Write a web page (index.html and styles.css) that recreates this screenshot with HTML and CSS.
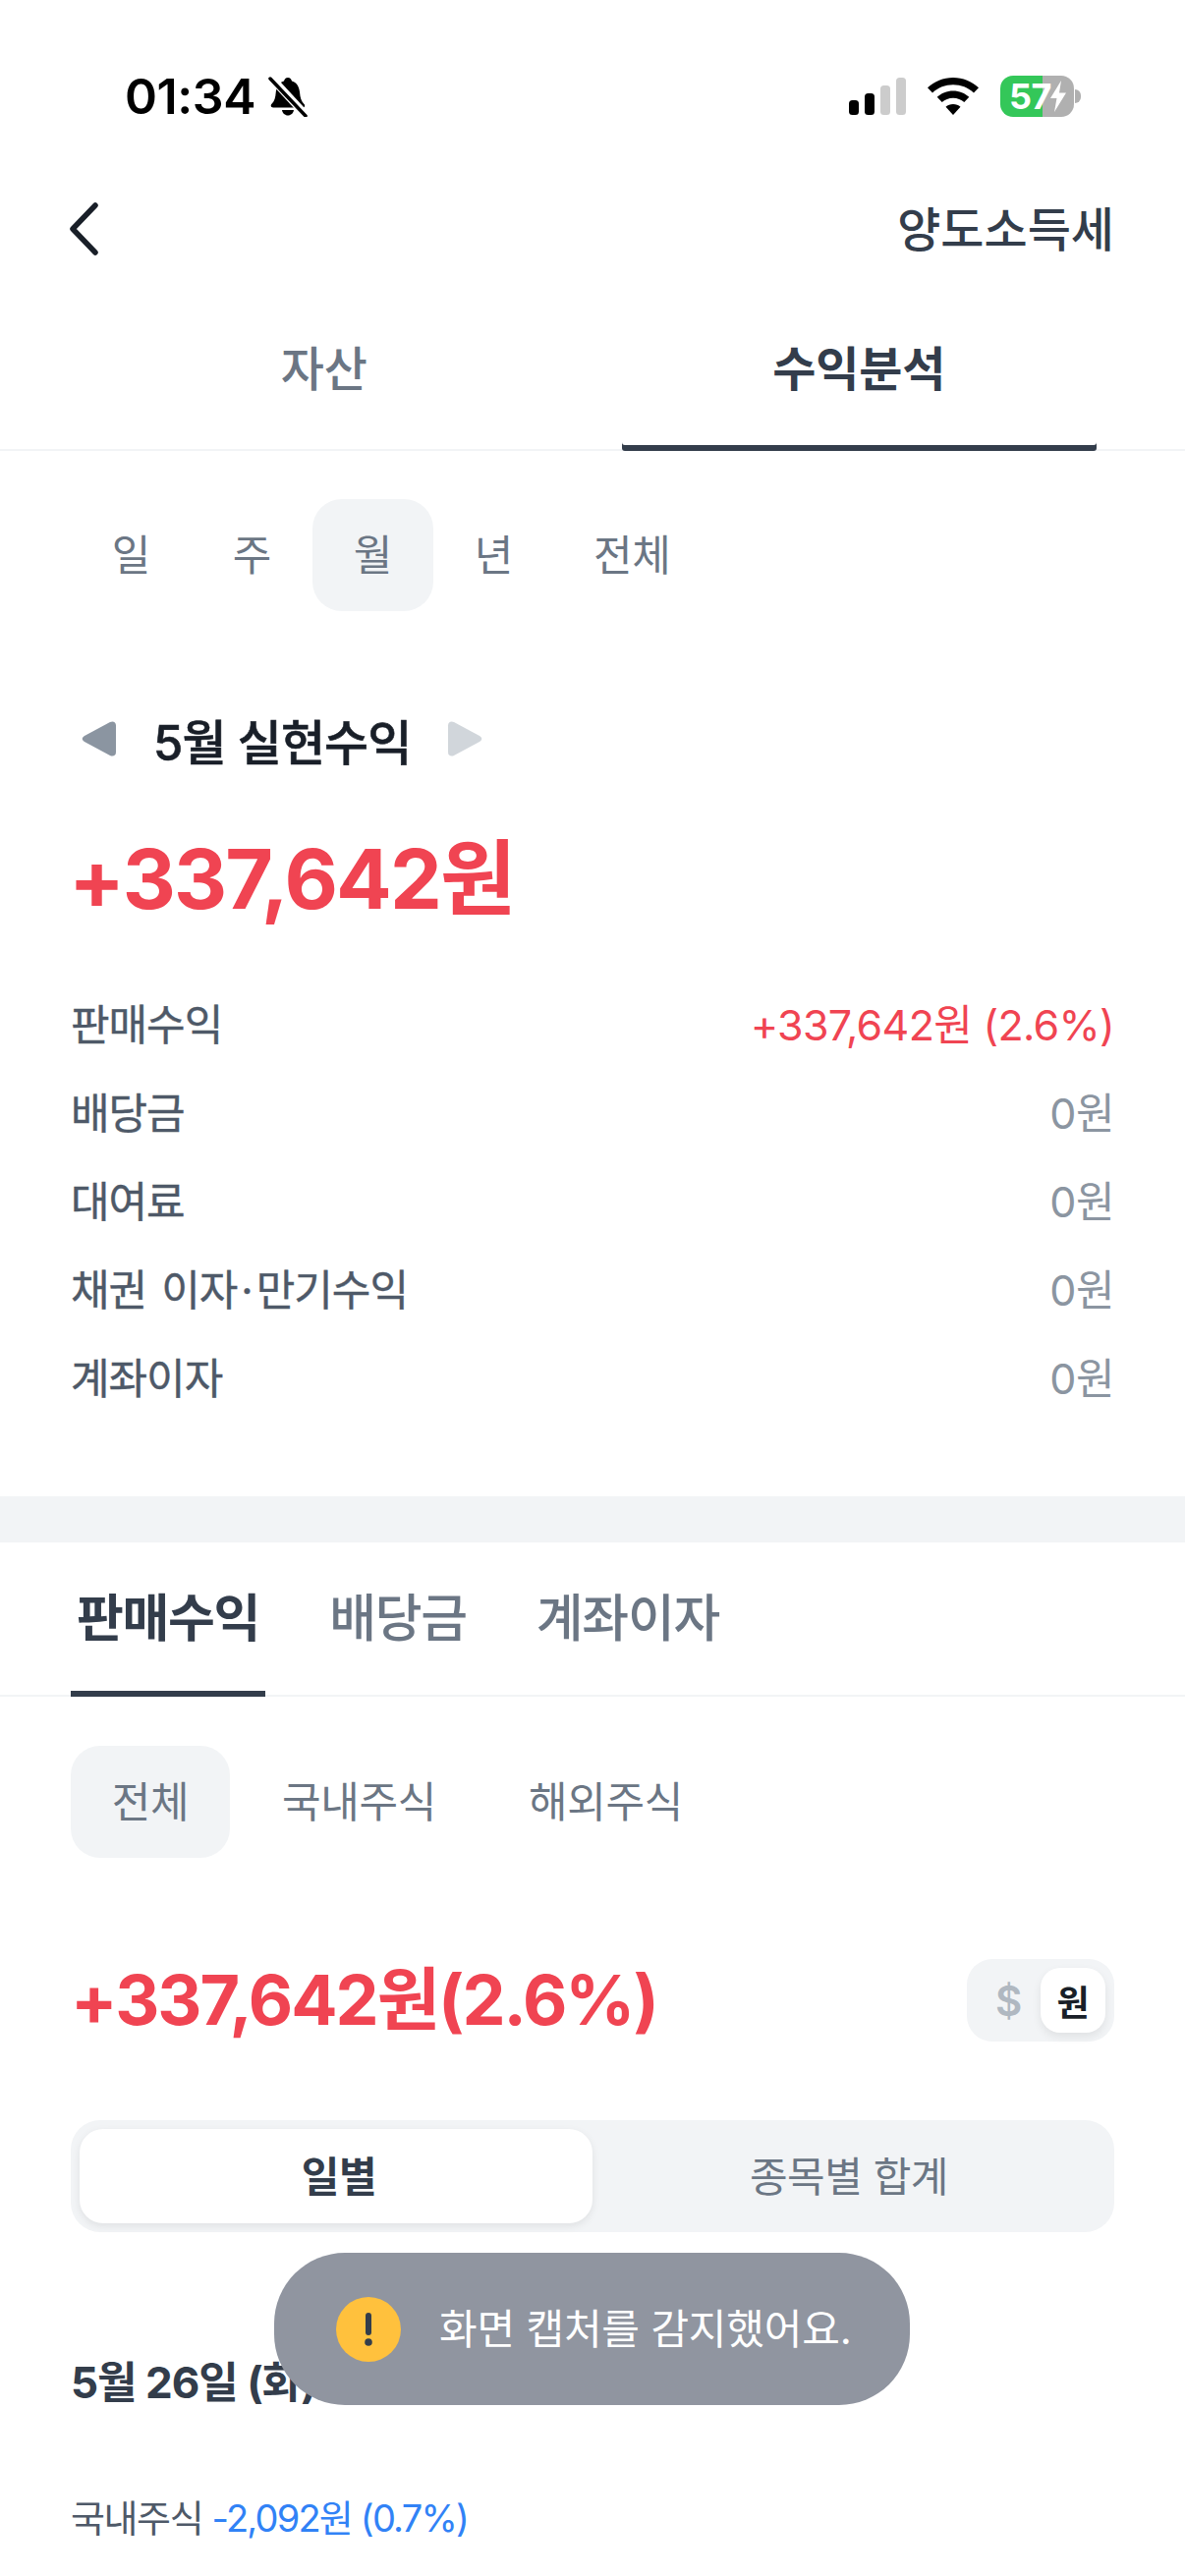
FILE: index.html
```html
<!DOCTYPE html>
<html lang="ko">
<head>
    <meta charset="UTF-8">
    <meta name="viewport" content="width=device-width, initial-scale=1.0">
    <title>양도소득세</title>
    <link rel="stylesheet" href="styles.css">
</head>
<body>

    <!-- Статус-бар -->
    <div class="status">
        <div class="status-left">
            <span class="time">01:34</span>
            <svg class="bell" width="42" height="42" viewBox="0 0 42 42">
                <path d="M21 2c2.200 0 3.600 1.500 4 3.600 5.600 1.700 7.600 6.400 8.100 12 .4 4.600 1.300 8.400 4.400 11.400 1.300 1.300.6 3.500-1.400 3.500H6c-2.200 0-3-2.300-1.500-3.700 3-2.800 3.800-6.600 4.200-11.200.5-5.600 2.700-10.300 8.300-12C17.400 3.500 18.800 2 21 2z" fill="#000"/>
                <path d="M15 35h12c-.5 3.200-3 5.500-6 5.500s-5.500-2.300-6-5.500z" fill="#000"/>
                <path d="M3 1l36 39" stroke="#fff" stroke-width="8" fill="none"/>
                <path d="M3 3l36 38" stroke="#000" stroke-width="3.500" stroke-linecap="round" fill="none"/>
            </svg>
        </div>
        <div class="status-right">
            <svg width="58" height="38" viewBox="0 0 58 38">
                <rect x="0" y="23" width="10" height="15" rx="3.500" fill="#000"/>
                <rect x="16" y="16" width="10" height="22" rx="3.500" fill="#000"/>
                <rect x="32" y="8" width="10" height="30" rx="3.500" fill="#ccc"/>
                <rect x="48" y="0" width="10" height="38" rx="3.500" fill="#ccc"/>
            </svg>
            <svg class="wifi" width="52" height="38" viewBox="0 0 52 38">
                <path d="M26 0c10 0 19 3.800 26 10.200l-5 5.300C41.300 10.200 34 7.300 26 7.300S10.700 10.200 5 15.500L0 10.200C7 3.800 16 0 26 0z" fill="#000"/>
                <path d="M26 13.500c6.300 0 12 2.400 16.300 6.300l-5 5.300c-3-2.700-7-4.300-11.300-4.300s-8.300 1.600-11.300 4.300l-5-5.300C14 15.900 19.700 13.500 26 13.500z" fill="#000"/>
                <path d="M26 27c2.900 0 5.500 1 7.500 2.800L26 38l-7.500-8.200c2-1.800 4.600-2.800 7.500-2.800z" fill="#000"/>
            </svg>
            <div class="battery">
                <span class="battery-num">57</span>
                <svg class="battery-bolt" width="18" height="32" viewBox="0 0 18 32">
                    <path d="M12 0L1 18h6.500L5 32 17 12.500h-7L12 0z" fill="#fff"/>
                </svg>
            </div>
            <div class="battery-nub"></div>
        </div>
    </div>

    <div class="nav">
        <svg width="32" height="56" viewBox="0 0 32 56">
            <path d="M28 4L5 28l23 24" stroke="#191f28" stroke-width="5.500" stroke-linecap="round" stroke-linejoin="round" fill="none"/>
        </svg>
        <span class="nav-title">양도소득세</span>
    </div>

    <div class="main-tabs">
        <div class="main-tab">자산</div>
        <div class="main-tab active">수익분석</div>
    </div>

    <div class="chips">
        <div class="chip">일</div>
        <div class="chip">주</div>
        <div class="chip active">월</div>
        <div class="chip">년</div>
        <div class="chip">전체</div>
    </div>

    <div class="month">
        <svg width="36" height="36" viewBox="0 0 36 36"><path d="M3 15L29 1c3-1.500 6 0 6 3.500v27c0 3.500-3 5-6 3.500L3 21c-3-1.700-3-4.300 0-6z" fill="#8b95a1"/></svg>
        <span class="month-title">5월 실현수익</span>
        <svg width="36" height="36" viewBox="0 0 36 36"><path d="M33 15L7 1C4-.5 1 1 1 4.500v27c0 3.500 3 5 6 3.500l26-14c3-1.700 3-4.300 0-6z" fill="#d1d6db"/></svg>
    </div>

    <div class="total">+337,642원</div>

    <div class="rows">
        <div class="row"><span class="label">판매수익</span><span class="red">+337,642원 (2.6%)</span></div>
        <div class="row"><span class="label">배당금</span><span class="gray">0원</span></div>
        <div class="row"><span class="label">대여료</span><span class="gray">0원</span></div>
        <div class="row"><span class="label">채권 이자<span class="dot">·</span>만기수익</span><span class="gray">0원</span></div>
        <div class="row"><span class="label">계좌이자</span><span class="gray">0원</span></div>
    </div>

    <div class="band"></div>

    <div class="sub-tabs">
        <div class="sub-tab active">판매수익</div>
        <div class="sub-tab">배당금</div>
        <div class="sub-tab">계좌이자</div>
    </div>

    <div class="chips chips-wide">
        <div class="chip active">전체</div>
        <div class="chip">국내주식</div>
        <div class="chip">해외주식</div>
    </div>

    <div class="summary">
        <span class="summary-num">+337,642원(2.6%)</span>
        <div class="toggle">
            <span class="toggle-off">$</span>
            <span class="toggle-on">원</span>
        </div>
    </div>

    <div class="segment">
        <div class="segment-item active">일별</div>
        <div class="segment-item">종목별 합계</div>
    </div>

    <div class="date">5월 26일 (화)</div>

    <div class="stock">국내주식 <span class="blue">-2,092원 (0.7%)</span></div>

    <!-- Тост поверх контента -->
    <div class="toast">
        <svg width="66" height="66" viewBox="0 0 66 66">
            <circle cx="33" cy="33" r="33" fill="#ffc13d"/>
            <rect x="30" y="16" width="6" height="23" rx="3" fill="#333d4b"/>
            <circle cx="33" cy="46" r="3.800" fill="#333d4b"/>
        </svg>
        <span class="toast-text">화면 캡처를 감지했어요.</span>
    </div>

</body>
</html>
```

FILE: styles.css
```css
body {
    margin: 0;
    width: 1206px;
    height: 2622px;
    overflow: hidden;
    position: relative;
    background-color: #fff;
    font-family: Inter, "Noto Sans CJK KR", sans-serif;
    color: #333d4b;
}

/* Статус-бар */
.status {
    height: 196px;
    padding: 0 106px 0 127px;
    display: flex;
    justify-content: space-between;
    align-items: center;
}

.status-left {
    display: flex;
    align-items: center;
    gap: 12px;
}

.time {
    font-size: 50px;
    font-weight: 600;
    color: #000;
    letter-spacing: -0.4px;
}

.status-right {
    display: flex;
    align-items: center;
}

.wifi {
    margin-left: 22px;
}

.battery {
    width: 75px;
    height: 42px;
    margin-left: 22px;
    border-radius: 13px;
    background: linear-gradient(to right, #34c759 57%, #b0b0b0 57%);
    position: relative;
    display: flex;
    align-items: center;
}

.battery-num {
    margin-left: 9px;
    font-size: 36px;
    font-weight: 700;
    color: #fff;
    letter-spacing: -0.5px;
}

.battery-bolt {
    position: absolute;
    left: 50px;
    top: 5px;
}

.battery-nub {
    width: 6px;
    height: 14px;
    margin-left: 1px;
    background-color: #b0b0b0;
    border-radius: 0 7px 7px 0;
}

/* Навигация */
.nav {
    height: 74px;
    padding: 0 72px 0 69px;
    display: flex;
    justify-content: space-between;
    align-items: center;
}

.nav-title {
    padding-bottom: 6px;
    font-size: 48px;
    font-weight: 500;
}

.main-tabs {
    margin-top: 21px;
    height: 168px;
    padding: 0 90px 0 88px;
    display: flex;
    gap: 61px;
    box-sizing: border-box;
    border-bottom: 2px solid #f2f4f6;
}

.main-tab {
    flex: 1;
    display: flex;
    justify-content: center;
    align-items: center;
    padding-bottom: 6px;
    font-size: 48px;
    font-weight: 500;
    letter-spacing: -0.2px;
    color: #6b7684;
    margin-bottom: -2px;
}

.main-tab.active {
    font-weight: 700;
    color: #333d4b;
    box-shadow: inset 0 -6px 0 #333d4b;
    border-radius: 0 0 3px 3px;
}

/* Фильтры */
.chips {
    margin-top: 49px;
    padding: 0 72px;
    display: flex;
}

.chip {
    height: 114px;
    min-width: 123px;
    padding: 0 40px 6px;
    box-sizing: border-box;
    display: flex;
    justify-content: center;
    align-items: center;
    border-radius: 30px;
    font-size: 43px;
    color: #6b7684;
    letter-spacing: -0.3px;
}

.chip.active {
    background-color: #f2f4f6;
}

.chips-wide {
    margin-top: 50px;
    gap: 12px;
}

.chips-wide .chip {
    min-width: 162px;
    padding: 0 41px 6px;
}

.month {
    margin-top: 100px;
    height: 60px;
    padding-left: 83px;
    display: flex;
    align-items: center;
}

.month-title {
    margin: 0 37px;
    font-size: 49px;
    font-weight: 500;
    color: #191f28;
    letter-spacing: -0.9px;
    -webkit-text-stroke: 0.6px #191f28;
}

.total {
    margin-top: 63px;
    padding-left: 70px;
    height: 100px;
    line-height: 100px;
    font-size: 84px;
    font-weight: 700;
    color: #f04452;
    letter-spacing: -1.9px;
}

.rows {
    margin-top: 53px;
    padding: 0 72px;
}

.row {
    height: 90px;
    padding-bottom: 6px;
    box-sizing: border-box;
    display: flex;
    justify-content: space-between;
    align-items: center;
    font-size: 43px;
    letter-spacing: -1px;
    color: #4e5968;
}

.label {
    word-spacing: 4px;
    -webkit-text-stroke: 0.4px #4e5968;
}

.dot {
    margin: 0 4px;
}

.red {
    color: #f04452;
    letter-spacing: -0.7px;
}

.gray {
    color: #8b95a1;
    letter-spacing: -0.5px;
}

.blue {
    color: #3182f6;
    letter-spacing: -1.8px;
}

.band {
    margin-top: 75px;
    height: 47px;
    background-color: #f2f4f6;
}

/* Вторые табы */
.sub-tabs {
    height: 157px;
    padding: 0 72px;
    box-sizing: border-box;
    display: flex;
    gap: 59px;
    border-bottom: 2px solid #f2f4f6;
}

.sub-tab {
    display: flex;
    align-items: center;
    padding: 0 6px 10px;
    margin-bottom: -2px;
    font-size: 52px;
    font-weight: 500;
    letter-spacing: -1.3px;
    color: #6b7684;
}

.sub-tab.active {
    font-weight: 700;
    color: #333d4b;
    box-shadow: inset 0 -6px 0 #333d4b;
}

.summary {
    margin-top: 100px;
    height: 90px;
    padding: 0 72px;
    display: flex;
    justify-content: space-between;
    align-items: center;
}

.summary-num {
    margin-bottom: 12px;
    font-size: 70px;
    font-weight: 700;
    color: #f04452;
    letter-spacing: -2px;
}

.toggle {
    width: 150px;
    height: 84px;
    padding: 10px 9px 10px 0;
    box-sizing: border-box;
    border-radius: 26px;
    background-color: #f2f4f6;
    display: flex;
    justify-content: space-between;
    align-items: center;
}

.toggle-off {
    margin-left: 29px;
    font-size: 42px;
    font-weight: 600;
    color: #b0b8c1;
}

.toggle-on {
    width: 66px;
    height: 66px;
    display: flex;
    justify-content: center;
    align-items: center;
    border-radius: 20px;
    background-color: #fff;
    box-shadow: 0 4px 10px rgba(0, 0, 0, 0.08);
    font-size: 36px;
    font-weight: 700;
    color: #191f28;
}

.segment {
    margin: 77px 72px 0;
    height: 114px;
    padding: 9px;
    box-sizing: border-box;
    border-radius: 30px;
    background-color: #f2f4f6;
    display: flex;
}

.segment-item {
    flex: 1;
    display: flex;
    justify-content: center;
    align-items: center;
    padding-bottom: 6px;
    border-radius: 24px;
    font-size: 42px;
    color: #6b7684;
    letter-spacing: -0.5px;
}

.segment-item.active {
    text-indent: 6px;
    background-color: #fff;
    box-shadow: 0 3px 8px rgba(0, 0, 0, 0.08);
    font-weight: 600;
    color: #333d4b;
}

.date {
    margin-top: 123px;
    padding-left: 72px;
    height: 60px;
    line-height: 60px;
    font-size: 44px;
    font-weight: 700;
    letter-spacing: -1px;
}

.stock {
    margin-top: 83px;
    padding-left: 72px;
    height: 50px;
    line-height: 50px;
    font-size: 38px;
    letter-spacing: -1.400px;
    color: #4e5968;
}

/* Тост */
.toast {
    position: absolute;
    left: 279px;
    top: 2293px;
    width: 647px;
    height: 155px;
    padding-left: 63px;
    box-sizing: border-box;
    border-radius: 72px;
    background-color: #9095a0;
    display: flex;
    align-items: center;
    gap: 39px;
    font-size: 42px;
    letter-spacing: -0.2px;
    color: #fff;
}

.toast-text {
    padding-bottom: 6px;
}
```
